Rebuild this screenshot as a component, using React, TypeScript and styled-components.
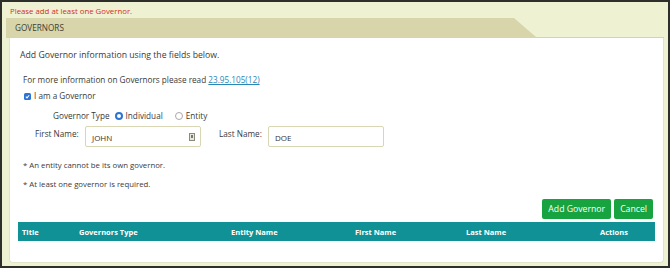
import React from "react";
import styled, { createGlobalStyle } from "styled-components";

const Global = createGlobalStyle`
  html, body { margin: 0; padding: 0; background: #ffffff; }
  body { font-family: "Open Sans", "Noto Sans", Arial, sans-serif; }
  * { box-sizing: border-box; }
`;

const Frame = styled.div`
  width: 670px;
  height: 268px;
  border: 2px solid #2e2e2a;
  background: #eef2d2;
  padding: 0 4px 3px 3px;
  display: flex;
  flex-direction: column;
  font-family: "Open Sans", "Noto Sans", Arial, sans-serif;
  font-size: 8.2px;
  color: #3a3a3a;
`;

const ErrorText = styled.div`
  color: #d62b1f;
  font-size: 7.8px;
  line-height: 11px;
  padding: 4px 0 1px 5px;
`;

const HeaderBar = styled.div`
  height: 20px;
  display: flex;
  border-bottom: 1px solid #d7d4a8;
  margin-left: 1px;
`;

const Tab = styled.div`
  width: 530px;
  background: #d8d5aa;
  clip-path: polygon(0 0, 508px 0, 530px 100%, 0 100%);
  padding-left: 9px;
  display: flex;
  align-items: center;
  font-size: 8.2px;
  color: #3d3d35;
`;

const Panel = styled.div`
  flex: 1;
  background: #ffffff;
  margin-left: 4px;
  border: 1px solid #e2e4c8;
  border-top: none;
  border-radius: 0 0 4px 4px;
  padding: 11px 8px 0 8px;
  display: flex;
  flex-direction: column;
`;

const Para = styled.div<{ $mt?: number; $ml?: number; $size?: number }>`
  margin-top: ${(p) => p.$mt ?? 0}px;
  margin-left: ${(p) => p.$ml ?? 0}px;
  font-size: ${(p) => p.$size ?? 8.2}px;
  line-height: 12px;
  color: #3a3a3a;
`;

const Link = styled.a`
  color: #2a86b4;
  text-decoration: underline;
`;

const CheckRow = styled.label`
  display: flex;
  align-items: center;
  gap: 3px;
  margin-top: 4px;
  margin-left: 6px;
  line-height: 12px;
`;

const CheckBox = styled.span`
  width: 7px;
  height: 7px;
  border-radius: 1.5px;
  background: #2d74d3;
  display: inline-flex;
  align-items: center;
  justify-content: center;
`;

const TypeRow = styled.div`
  display: flex;
  align-items: center;
  margin-top: 8px;
  margin-left: 35px;
  line-height: 12px;
`;

const RadioLabel = styled.span<{ $ml: number }>`
  display: inline-flex;
  align-items: center;
  gap: 3px;
  margin-left: ${(p) => p.$ml}px;
`;

const Radio = styled.span<{ $on?: boolean }>`
  width: 8px;
  height: 8px;
  border-radius: 50%;
  border: ${(p) => (p.$on ? "2.5px solid #2d74d3" : "1px solid #a9a9a9")};
  background: #ffffff;
`;

const NameRow = styled.div`
  display: flex;
  align-items: flex-start;
  margin-top: 4px;
  margin-left: 17px;
`;

const FieldLabel = styled.span<{ $w: number }>`
  width: ${(p) => p.$w}px;
  padding-top: 2px;
  line-height: 12px;
`;

const Input = styled.div<{ $mr?: number }>`
  width: 116px;
  height: 21px;
  border: 1px solid #d9d6b4;
  border-radius: 2px;
  display: flex;
  align-items: center;
  justify-content: space-between;
  padding: 2px 5px 0 6px;
  margin-right: ${(p) => p.$mr ?? 0}px;
  color: #333;
  font-size: 8px;
`;

const KeyIcon = styled.span`
  width: 6px;
  height: 8px;
  border: 1px solid #8a8a7a;
  background: #e9e8d8;
  display: inline-flex;
  align-items: center;
  justify-content: center;
  margin-top: -2px;
  &::after {
    content: "";
    width: 2px;
    height: 3px;
    background: #777;
  }
`;

const ButtonRow = styled.div`
  display: flex;
  justify-content: flex-end;
  gap: 3px;
  margin-top: 9px;
  padding-right: 2px;
`;

const Button = styled.button`
  height: 20px;
  border: none;
  border-radius: 2px;
  background: #17a340;
  color: #ffffff;
  font-family: "Open Sans", "Noto Sans", Arial, sans-serif;
  font-size: 8.7px;
  padding: 0 6px;
  cursor: pointer;
`;

const Table = styled.div`
  margin-top: 3px;
  height: 19px;
  background: #0f9196;
  display: grid;
  grid-template-columns: 57px 152px 124px 111px 134px 1fr;
  align-items: center;
  padding-left: 4px;
  color: #ffffff;
  font-weight: 700;
  font-size: 7.5px;
`;

const Th = styled.span``;

export default function App() {
  return (
    <>
      <Global />
      <Frame>
        <ErrorText>Please add at least one Governor.</ErrorText>
        <HeaderBar>
          <Tab>GOVERNORS</Tab>
        </HeaderBar>
        <Panel>
          <Para $ml={2} $size={8.7}>Add Governor information using the fields below.</Para>
          <Para $mt={13} $ml={5} $size={8.2}>
            For more information on Governors please read <Link href="#">23.95.105(12)</Link>
          </Para>
          <CheckRow>
            <CheckBox>
              <svg width="5" height="5" viewBox="0 0 6 6">
                <path d="M1 3.2 L2.4 4.6 L5 1.5" stroke="#fff" strokeWidth="1.3" fill="none" />
              </svg>
            </CheckBox>
            I am a Governor
          </CheckRow>
          <TypeRow>
            Governor Type
            <RadioLabel $ml={5}>
              <Radio $on />
              Individual
            </RadioLabel>
            <RadioLabel $ml={12}>
              <Radio />
              Entity
            </RadioLabel>
          </TypeRow>
          <NameRow>
            <FieldLabel $w={50}>First Name:</FieldLabel>
            <Input $mr={18}>
              JOHN
              <KeyIcon />
            </Input>
            <FieldLabel $w={49}>Last Name:</FieldLabel>
            <Input>DOE</Input>
          </NameRow>
          <Para $mt={12} $ml={5} $size={7.8}>* An entity cannot be its own governor.</Para>
          <Para $mt={7} $ml={5} $size={7.8}>* At least one governor is required.</Para>
          <ButtonRow>
            <Button>Add Governor</Button>
            <Button>Cancel</Button>
          </ButtonRow>
          <Table>
            <Th>Title</Th>
            <Th>Governors Type</Th>
            <Th>Entity Name</Th>
            <Th>First Name</Th>
            <Th>Last Name</Th>
            <Th>Actions</Th>
          </Table>
        </Panel>
      </Frame>
    </>
  );
}
